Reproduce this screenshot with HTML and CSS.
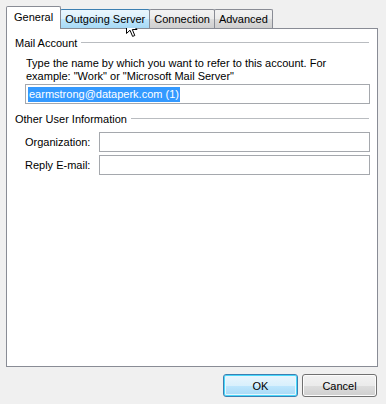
FILE: index.html
```html
<!DOCTYPE html>
<html lang="en">
<head>
  <meta charset="UTF-8">
  <title>Account Settings</title>
  <link rel="stylesheet" href="styles.css">
</head>
<body>
  <div class="dialog">
    <div class="tabs">
      <div class="tab selected">General</div>
      <div class="tab hover">Outgoing Server</div>
      <div class="tab">Connection</div>
      <div class="tab">Advanced</div>
    </div>
    <div class="panel">
      <div class="group-title"><span>Mail Account</span><i class="rule"></i></div>
      <p class="hint">Type the name by which you want to refer to this account. For example: "Work" or "Microsoft Mail Server"</p>
      <div class="field wide"><span class="sel">earmstrong@dataperk.com (1)</span></div>

      <div class="group-title second"><span>Other User Information</span><i class="rule"></i></div>
      <div class="row first">
        <label>Organization:</label>
        <div class="field"></div>
      </div>
      <div class="row">
        <label>Reply E-mail:</label>
        <div class="field"></div>
      </div>
    </div>
    <div class="buttons">
      <button class="btn default">OK</button>
      <button class="btn">Cancel</button>
    </div>
  </div>
  <svg class="cursor" width="13" height="20" viewBox="0 0 13 20">
    <path d="M0.5 0.5 L0.5 15.5 L4 12.2 L6.6 18.4 L8.8 17.5 L6.3 11.5 L11 11.5 Z" fill="#fff" stroke="#000" stroke-width="1" stroke-linejoin="miter"/>
  </svg>
</body>
</html>
```

FILE: styles.css
```css
body {
  margin: 0;
  background: #f0f0f0;
  font-family: "Liberation Sans", Arial, sans-serif;
  font-size: 11px;
  color: #000;
}
.dialog {
  width: 386px;
  height: 404px;
  padding: 7px 8px 0 6px;
  box-sizing: border-box;
}
.tabs {
  display: flex;
  align-items: flex-end;
  height: 21px;
  position: relative;
  z-index: 1;
}
.tab {
  height: 18px;
  line-height: 18px;
  padding: 0 4px;
  border: 1px solid #898c95;
  border-bottom: none;
  margin-left: -1px;
  background: linear-gradient(#f2f2f2 0%, #ebebeb 50%, #dddddd 51%, #cfcfcf 100%);
  border-radius: 2px 2px 0 0;
}
.tab.hover {
  background: linear-gradient(#eaf6fd 0%, #d9f0fc 50%, #bee6fd 51%, #a7d9f5 100%);
  border-color: #3c7fb1;
  border-bottom: none;
}
.tab.selected {
  height: 22px;
  line-height: 20px;
  margin-left: 0;
  margin-bottom: -1px;
  padding: 0 7px;
  background: #fff;
  position: relative;
  z-index: 2;
}
.panel {
  height: 330px;
  background: #fff;
  border: 1px solid #898c95;
  padding: 7px 7px 0 8px;
  box-sizing: content-box;
  width: 355px;
}
.group-title {
  display: flex;
  align-items: center;
  height: 14px;
  line-height: 14px;
}
.group-title.second {
  margin-top: 8px;
}
.group-title span {
  padding-right: 4px;
}
.rule {
  flex: 1;
  height: 0;
  border-top: 1px solid #b9bcc0;
  border-bottom: 1px solid #fff;
  margin-right: 1px;
}
.hint {
  margin: 7px 0 0 11px;
  line-height: 13px;
  width: 345px;
}
.field {
  height: 18px;
  border: 1px solid #a5a8ad;
  background: #fff;
  flex: 1;
}
.field.wide {
  margin: 1px 0 0 10px;
  display: flex;
  align-items: center;
  padding-left: 2px;
}
.sel {
  background: #3399ff;
  color: #fff;
  line-height: 15px;
  padding: 0 1px;
}
.row {
  display: flex;
  align-items: center;
  margin: 3px 0 0 10px;
}
.row.first {
  margin-top: 6px;
}
.row label {
  width: 74px;
}
.buttons {
  display: flex;
  justify-content: flex-end;
  gap: 4px;
  margin-top: 7px;
  padding-right: 1px;
}
.btn {
  width: 75px;
  height: 23px;
  font: inherit;
  color: #000;
  border: 1px solid #707070;
  border-radius: 3px;
  background: linear-gradient(#f2f2f2 0%, #ebebeb 50%, #dddddd 51%, #cfcfcf 100%);
  box-shadow: inset 0 0 0 1px #fcfcfc;
  padding: 0;
}
.btn.default {
  border-color: #3c7fb1;
  background: linear-gradient(#eaf6fd 0%, #d9f0fc 50%, #bee6fd 51%, #a7d9f5 100%);
  box-shadow: inset 0 0 0 1px #48d8fb, inset 0 0 0 2px #e6f6fd;
}
.cursor {
  position: absolute;
  left: 126px;
  top: 18px;
}
```
